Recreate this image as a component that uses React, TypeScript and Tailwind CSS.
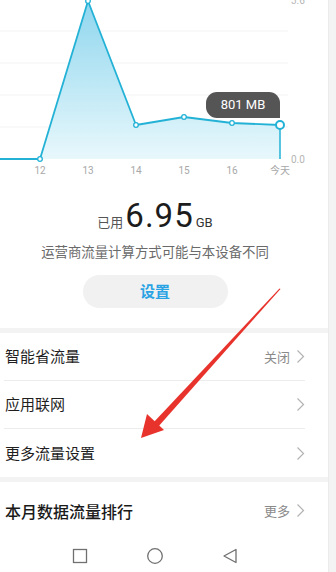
const cjk = { fontFamily: '"Noto Sans CJK SC", "Noto Sans", sans-serif' };
const num = { fontFamily: 'Roboto, "Noto Sans CJK SC", sans-serif' };

const pts: [number, number][] = [
  [40, 159],
  [88, 1],
  [136, 125],
  [184, 117],
  [232, 123],
  [280, 125],
];

function Chevron() {
  return (
    <svg width="9" height="15" viewBox="0 0 9 15" className="ml-[6px]">
      <path d="M1.5 1.5 L7.5 7.5 L1.5 13.5" fill="none" stroke="#b3b3b3" strokeWidth="1.2" />
    </svg>
  );
}

function Chart() {
  const line = `M0,159 L${pts.map((p) => p.join(',')).join(' L')}`;
  const area = `M40,159 L${pts.map((p) => p.join(',')).join(' L')} L280,159 Z`;
  const labels = ['12', '13', '14', '15', '16', '今天'];
  return (
    <div className="relative h-[182px]">
      <svg width="329" height="182" className="block">
        <defs>
          <linearGradient id="fill" x1="0" y1="0" x2="0" y2="1">
            <stop offset="0" stopColor="#8fd6ee" />
            <stop offset="1" stopColor="#e8f8fc" />
          </linearGradient>
        </defs>
        {[31, 63, 95, 127].map((y) => (
          <line key={y} x1="0" x2="288" y1={y} y2={y} stroke="#f3f3f3" strokeWidth="1" />
        ))}
        <path d={area} fill="url(#fill)" />
        <line x1="280" y1="125" x2="280" y2="159" stroke="#23b2d6" strokeWidth="1.5" />
        <path d={line} fill="none" stroke="#23b2d6" strokeWidth="1.8" strokeLinejoin="round" />
        {pts.slice(0, 5).map(([x, y]) => (
          <circle key={x} cx={x} cy={y} r="2.3" fill="#fff" stroke="#23b2d6" strokeWidth="1.3" />
        ))}
        <circle cx="280" cy="125" r="4" fill="#fff" stroke="#23b2d6" strokeWidth="2" />
        <text x="291" y="4" fontSize="10" fill="#b5b5b5" style={num}>3.6</text>
        <text x="291" y="163" fontSize="10" fill="#b5b5b5" style={num}>0.0</text>
        {labels.map((l, i) => (
          <text
            key={l}
            x={40 + i * 48}
            y="174"
            fontSize="10"
            fill="#a8a8a8"
            textAnchor="middle"
            style={l === '今天' ? cjk : num}
          >
            {l}
          </text>
        ))}
      </svg>
      <div
        className="absolute left-[206px] top-[92px] flex h-[26px] w-[74px] items-center justify-center rounded-t-[11px] rounded-bl-[11px] bg-[#555555] text-[13px] text-white"
        style={num}
      >
        801 MB
      </div>
    </div>
  );
}

function Row({ title, value, last }: { title: string; value?: string; last?: boolean }) {
  return (
    <div className={`ml-[4px] mr-[23px] flex h-[48px] items-center ${last ? '' : 'border-b border-[#ececec]'}`}>
      <span className="flex-1 pl-[1px] text-[15px] text-[#1f1f1f]">{title}</span>
      {value && <span className="text-[13px] text-[#8a8a8a]">{value}</span>}
      <Chevron />
    </div>
  );
}

export default function App() {
  return (
    <div className="relative flex h-[572px] w-[336px] overflow-hidden bg-[#f3f3f3]" style={cjk}>
      <div className="flex w-[329px] flex-col border-r border-[#ebebeb]">
        <div className="bg-white">
          <Chart />
          <div className="flex h-[146px] flex-col items-center pr-[18px]">
            <div className="mt-[14px] flex items-baseline text-[#1c1c1c]">
              <span className="text-[13px] text-[#555]">已用</span>
              <span className="ml-[2px] text-[33px] leading-[40px] tracking-[1px]" style={num}>6.95</span>
              <span className="ml-[2px] text-[13px] text-[#333]" style={num}>GB</span>
            </div>
            <div className="mt-[5px] text-[13.4px] text-[#6a6a6a]">运营商流量计算方式可能与本设备不同</div>
            <div className="mt-[14px] flex h-[33px] w-[145px] items-center justify-center rounded-full bg-[#f1f1f1] text-[15px] font-bold text-[#2aa3e4]">
              设置
            </div>
          </div>
        </div>
        <div className="h-[5px]" />
        <div className="bg-white">
          <Row title="智能省流量" value="关闭" />
          <Row title="应用联网" />
          <Row title="更多流量设置" last />
        </div>
        <div className="h-[5px]" />
        <div className="flex-1 bg-white">
          <div className="ml-[4px] mr-[23px] flex h-[62px] items-center pb-[5px]">
            <span className="flex-1 pl-[1px] text-[16px] font-medium text-[#1a1a1a]">本月数据流量排行</span>
            <span className="text-[13px] text-[#8a8a8a]">更多</span>
            <Chevron />
          </div>
          <div className="mt-[3px] flex items-center justify-center gap-[58px] pr-[18px]">
            <svg width="16" height="16" viewBox="0 0 16 16">
              <rect x="1.5" y="1.5" width="13" height="13" fill="none" stroke="#707070" strokeWidth="1.3" />
            </svg>
            <svg width="18" height="18" viewBox="0 0 18 18">
              <circle cx="9" cy="9" r="7.3" fill="none" stroke="#707070" strokeWidth="1.3" />
            </svg>
            <svg width="16" height="16" viewBox="0 0 16 16">
              <path d="M14 1.5 L2 8 L14 14.5 Z" fill="none" stroke="#707070" strokeWidth="1.3" strokeLinejoin="round" />
            </svg>
          </div>
        </div>
      </div>
      <div className="flex-1" />
      <svg className="pointer-events-none absolute left-0 top-0" width="336" height="572">
        <path d="M280.5,289 L279.5,288.5 L153,423 L157.5,427.5 Z" fill="#e8332c" />
        <path d="M141,438 L147,414 L164,430 Z" fill="#e8332c" />
      </svg>
    </div>
  );
}
